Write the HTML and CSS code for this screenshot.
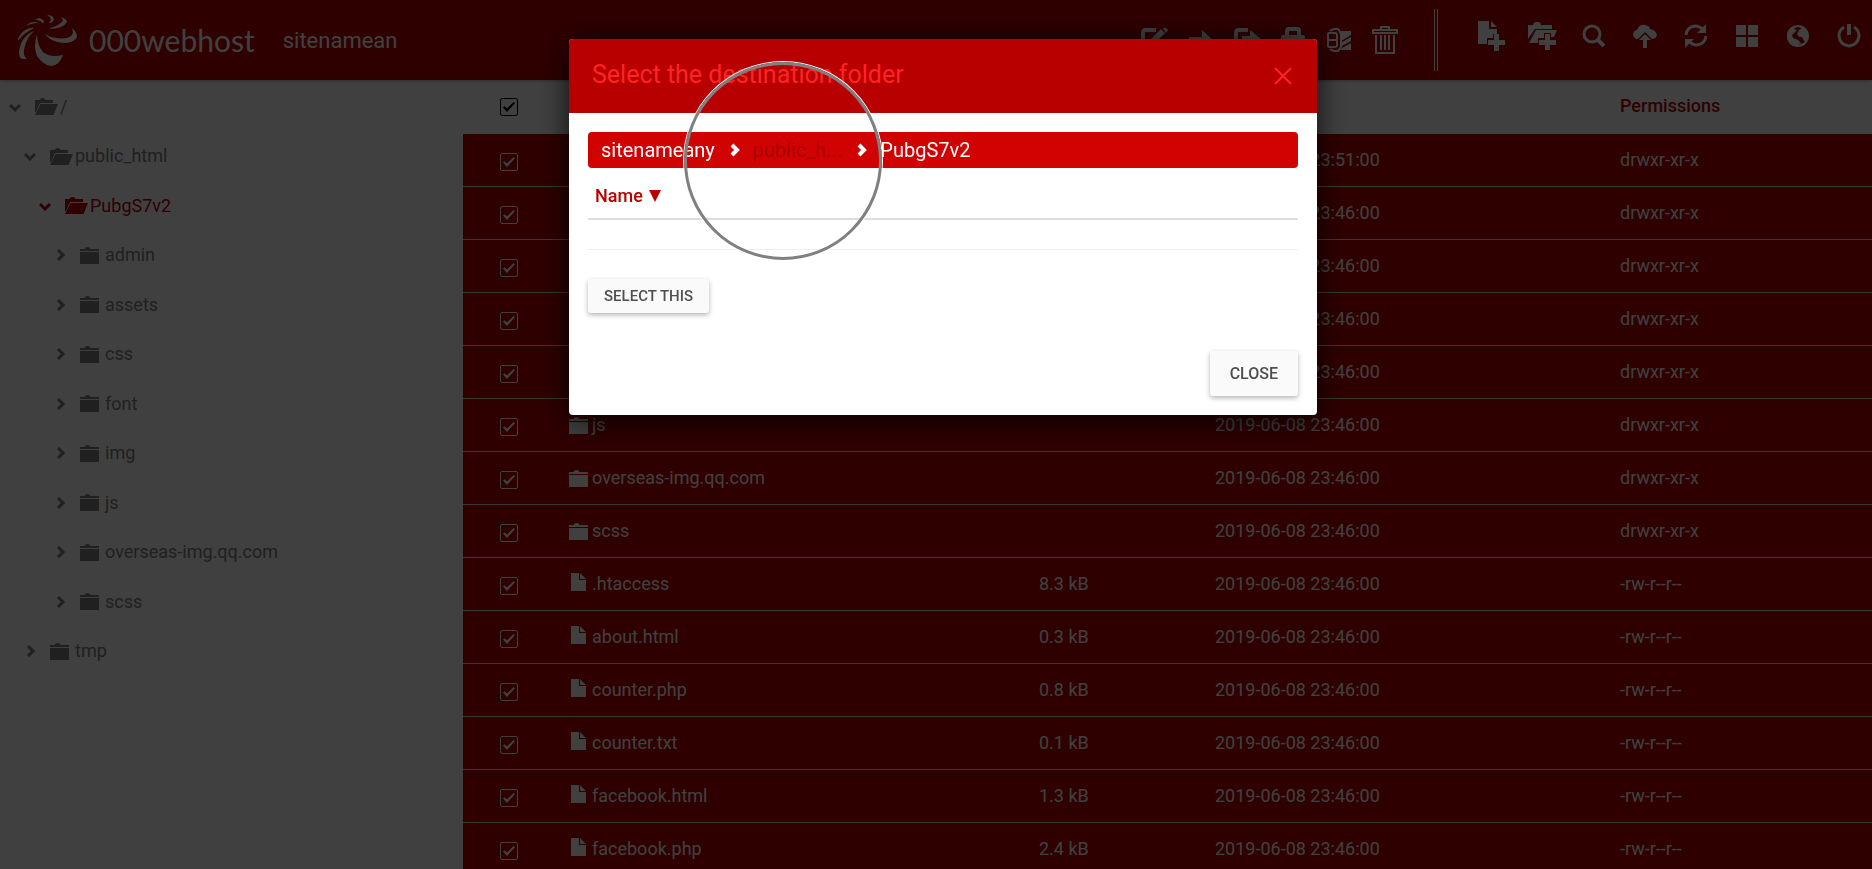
FILE: index.html
```html
<!DOCTYPE html>
<html lang="en">
<head>
<meta charset="utf-8">
<title>000webhost file manager</title>
<link rel="stylesheet" href="styles.css">
</head>
<body>
<svg class="sprite" aria-hidden="true">
  <symbol id="folder" viewBox="0 0 19 17"><path d="M0 4V2h4.500Q5 0 7.500 0 10 0 10.500 2H19v2zM0 5h19v12H0z"/></symbol>
  <symbol id="folder-open" viewBox="0 0 23 17"><path d="M0 14V2h4.500Q5 0 7.500 0 10 0 10.500 2H18v3H5L1 14zM5.500 6H23l-4.500 11H0z"/></symbol>
  <symbol id="file" viewBox="0 0 15 18"><path d="M0 0h8v7h7v11H0zM9 0l6 6H9z"/></symbol>
  <symbol id="down" viewBox="0 0 12 12"><path d="M1 4l5 5 5-5" fill="none" stroke="currentColor" stroke-width="3"/></symbol>
  <symbol id="right" viewBox="0 0 12 12"><path d="M4 1l5 5-5 5" fill="none" stroke="currentColor" stroke-width="3"/></symbol>
  <symbol id="right-bold" viewBox="0 0 12 14"><path d="M3 2l5 5-5 5" fill="none" stroke="currentColor" stroke-width="4"/></symbol>
</svg>

<div class="app">
  <header class="topbar">
    <a class="brand" href="#">
      <svg class="brand-mark" viewBox="0 0 60 52" aria-hidden="true">
        <path d="M28 20Q34 24 44 24.500 51 24.500 54 22 57 19 55 14 60 18 60 23 58 28 49 29 40 29 33 25 29 22 28 20z"/>
        <path d="M20 20Q20 31 26 38 33 44 46 41 42 52 34 52 26 51 20 42 16 33 20 20z"/>
        <path d="M17 17Q4 22 2 38 2 46 7 45L10 45Q6 42 7 36 9 24 17 17z"/>
        <path d="M16 14Q5 15 1 26 7 18 16 14z" stroke="currentColor"/>
        <path d="M32 15Q42 11 45 8 47 6 44 3 50 5 50 8 46 15 32 15z"/>
        <path d="M32 9Q35 6 33 3L30 1Q36 1 37 5 36 9 32 9z"/>
        <path d="M18 6Q23 2 27 7L26 10Q24 6 18 6zM9 12Q14 6 22 9 14 9 9 12z"/>
      </svg>
      <span class="brand-name">000webhost</span>
    </a>
    <span class="site">sitenamean</span>
    <nav class="tools" aria-label="Selection">
      <button aria-label="Rename"><svg width="28" height="24" viewBox="0 0 28 24"><path d="M15 2H5Q2 2 2 5v14q0 3 3 3h12q3 0 3-3v-6" fill="none" stroke="currentColor" stroke-width="4"/><path d="M9 15l1-4L20 1l4 4-10 10zM22 0h3l2 2-2 3z"/></svg></button>
      <button aria-label="Move"><svg width="24" height="24" viewBox="0 0 24 24"><path d="M0 9h13V2l11 10-11 10v-7H0z"/></svg></button>
      <button aria-label="Copy"><svg width="27" height="24" viewBox="0 0 27 24"><path d="M14 2H5Q2 2 2 5v14q0 3 3 3h12" fill="none" stroke="currentColor" stroke-width="4"/><path d="M8 8h8V2l11 9-11 9v-6H8z"/></svg></button>
      <button aria-label="Lock"><svg width="24" height="26" viewBox="0 0 24 26"><path d="M6 10V4q0-2 2-2h8q2 0 2 2v6" fill="none" stroke="currentColor" stroke-width="4"/><path d="M2 8h20q2 0 2 2v16H0V10q0-2 2-2z"/></svg></button>
      <button aria-label="Extract"><svg width="24" height="24" viewBox="0 0 24 24"><path d="M3 3Q5 1 8 1h3l3 4v14l-3 4H8q-3 0-5-2M2 5h6q2 0 2 2v10q0 2-2 2H2q-1 0-1-1V6q0-1 1-1zM1 12h9" fill="none" stroke="currentColor" stroke-width="2"/><path d="M12 3h12v4l-8 5h-2zM15 14l9-5v4l-9 5zM15 20l9-5v7H13z"/></svg></button>
      <button aria-label="Delete"><svg width="24" height="28" viewBox="0 0 24 28"><path d="M0 4h24v3H0zM8 4V1h8v3M3 9v18h18V9M8 9v15M12 9v15M16 9v15" fill="none" stroke="currentColor" stroke-width="2"/></svg></button>
    </nav>
    <nav class="tools tools-main" aria-label="Files">
      <button aria-label="New file"><svg width="27" height="30" viewBox="0 0 27 30"><path d="M0 0h11v8h8v5h-4v4H9v6H0zM13 0l6 6h-6zM16 13h5v6h6v5h-6v6h-5v-6h-6v-5h6z"/></svg></button>
      <button aria-label="New folder"><svg width="29" height="28" viewBox="0 0 29 28"><path d="M0 17V3h5Q5 0 9 0t4 3h11v4H7zM8 8h21l-3 7h-3v-4h-7v5h-6v5H1zM17 12h5v6h6v5h-6v5h-5v-5h-6v-5h6z"/></svg></button>
      <button aria-label="Search"><svg width="24" height="24" viewBox="0 0 24 24"><circle cx="10" cy="10" r="8" fill="none" stroke="currentColor" stroke-width="3"/><path d="M15 15l7 7" stroke="currentColor" stroke-width="4"/></svg></button>
      <button aria-label="Upload"><svg width="24" height="24" viewBox="0 0 24 24"><path d="M4 15q-4-1-4-5 1-4 4-4Q6 0 12 1q5 1 5 4 6 1 7 6-1 4-5 4l-7-7-7 7zM12 10l6 6h-4v8h-4v-8H6z"/></svg></button>
      <button aria-label="Refresh"><svg width="24" height="24" viewBox="0 0 24 24"><path d="M2 11Q3 3 11 2q5 0 8 4M22 12q-1 8-9 9-5 0-8-4" fill="none" stroke="currentColor" stroke-width="3"/><path d="M22 0v9h-9zM1 24v-9h9z"/></svg></button>
      <button aria-label="View"><svg width="22" height="22" viewBox="0 0 22 22"><path d="M0 0h10v10H0zM12 0h10v10H12zM0 12h10v10H0zM12 12h10v10H12z"/></svg></button>
      <button aria-label="Language"><svg width="24" height="24" viewBox="0 0 24 24"><circle cx="12" cy="12" r="10" fill="none" stroke="currentColor" stroke-width="2"/><path d="M1 12Q1 2 11 2L8 5l3 1-3 3-2 2 1 3 5 2 3 3-4 3Q1 22 1 12zM13 3l3-1q6 3 6 11l-2 5-2-1-2-4-3 0-2-3 2-4 3-2zM14 20l4-1 1 1-4 2z"/></svg></button>
      <button aria-label="Log out"><svg width="24" height="24" viewBox="0 0 24 24"><path d="M7 3q-5 3-5 9 1 9 10 10 9-1 10-10 0-6-5-9" fill="none" stroke="currentColor" stroke-width="3"/><path d="M10 0h4v11h-4z"/></svg></button>
    </nav>
  </header>

  <div class="main">
    <aside class="sidebar">
      <ul class="tree">
        <li><svg class="chev"><use href="#down"/></svg><svg class="open"><use href="#folder-open"/></svg><a href="#">/</a></li>
        <li class="l1"><svg class="chev"><use href="#down"/></svg><svg class="open"><use href="#folder-open"/></svg><a href="#">public_html</a></li>
        <li class="l2 current"><svg class="chev"><use href="#down"/></svg><svg class="open"><use href="#folder-open"/></svg><a href="#">PubgS7v2</a></li>
        <li class="l3"><svg class="chev"><use href="#right"/></svg><svg class="dir"><use href="#folder"/></svg><a href="#">admin</a></li>
        <li class="l3"><svg class="chev"><use href="#right"/></svg><svg class="dir"><use href="#folder"/></svg><a href="#">assets</a></li>
        <li class="l3"><svg class="chev"><use href="#right"/></svg><svg class="dir"><use href="#folder"/></svg><a href="#">css</a></li>
        <li class="l3"><svg class="chev"><use href="#right"/></svg><svg class="dir"><use href="#folder"/></svg><a href="#">font</a></li>
        <li class="l3"><svg class="chev"><use href="#right"/></svg><svg class="dir"><use href="#folder"/></svg><a href="#">img</a></li>
        <li class="l3"><svg class="chev"><use href="#right"/></svg><svg class="dir"><use href="#folder"/></svg><a href="#">js</a></li>
        <li class="l3"><svg class="chev"><use href="#right"/></svg><svg class="dir"><use href="#folder"/></svg><a href="#">overseas-img.qq.com</a></li>
        <li class="l3"><svg class="chev"><use href="#right"/></svg><svg class="dir"><use href="#folder"/></svg><a href="#">scss</a></li>
        <li class="l1"><svg class="chev"><use href="#right"/></svg><svg class="dir"><use href="#folder"/></svg><a href="#">tmp</a></li>
      </ul>
    </aside>

    <div class="listing">
      <table class="files">
        <colgroup><col class="c-check"><col class="c-name"><col class="c-size"><col class="c-date"><col class="c-perm"></colgroup>
        <thead>
          <tr><th><input type="checkbox" checked aria-label="Select all"></th><th></th><th></th><th></th><th>Permissions</th></tr>
        </thead>
        <tbody>
          <tr><td><input type="checkbox" checked aria-label="Select row 1"></td><td></td><td></td><td>2019-06-08 23:51:00</td><td>drwxr-xr-x</td></tr>
          <tr><td><input type="checkbox" checked aria-label="Select row 2"></td><td></td><td></td><td>2019-06-08 23:46:00</td><td>drwxr-xr-x</td></tr>
          <tr><td><input type="checkbox" checked aria-label="Select row 3"></td><td></td><td></td><td>2019-06-08 23:46:00</td><td>drwxr-xr-x</td></tr>
          <tr><td><input type="checkbox" checked aria-label="Select row 4"></td><td></td><td></td><td>2019-06-08 23:46:00</td><td>drwxr-xr-x</td></tr>
          <tr><td><input type="checkbox" checked aria-label="Select row 5"></td><td></td><td></td><td>2019-06-08 23:46:00</td><td>drwxr-xr-x</td></tr>
          <tr><td><input type="checkbox" checked aria-label="Select js"></td><td><a href="#"><svg class="dir"><use href="#folder"/></svg>js</a></td><td></td><td>2019-06-08 23:46:00</td><td>drwxr-xr-x</td></tr>
          <tr><td><input type="checkbox" checked aria-label="Select overseas-img.qq.com"></td><td><a href="#"><svg class="dir"><use href="#folder"/></svg>overseas-img.qq.com</a></td><td></td><td>2019-06-08 23:46:00</td><td>drwxr-xr-x</td></tr>
          <tr><td><input type="checkbox" checked aria-label="Select scss"></td><td><a href="#"><svg class="dir"><use href="#folder"/></svg>scss</a></td><td></td><td>2019-06-08 23:46:00</td><td>drwxr-xr-x</td></tr>
          <tr><td><input type="checkbox" checked aria-label="Select .htaccess"></td><td><a href="#"><svg class="doc"><use href="#file"/></svg>.htaccess</a></td><td>8.3 kB</td><td>2019-06-08 23:46:00</td><td>-rw-r--r--</td></tr>
          <tr><td><input type="checkbox" checked aria-label="Select about.html"></td><td><a href="#"><svg class="doc"><use href="#file"/></svg>about.html</a></td><td>0.3 kB</td><td>2019-06-08 23:46:00</td><td>-rw-r--r--</td></tr>
          <tr><td><input type="checkbox" checked aria-label="Select counter.php"></td><td><a href="#"><svg class="doc"><use href="#file"/></svg>counter.php</a></td><td>0.8 kB</td><td>2019-06-08 23:46:00</td><td>-rw-r--r--</td></tr>
          <tr><td><input type="checkbox" checked aria-label="Select counter.txt"></td><td><a href="#"><svg class="doc"><use href="#file"/></svg>counter.txt</a></td><td>0.1 kB</td><td>2019-06-08 23:46:00</td><td>-rw-r--r--</td></tr>
          <tr><td><input type="checkbox" checked aria-label="Select facebook.html"></td><td><a href="#"><svg class="doc"><use href="#file"/></svg>facebook.html</a></td><td>1.3 kB</td><td>2019-06-08 23:46:00</td><td>-rw-r--r--</td></tr>
          <tr><td><input type="checkbox" checked aria-label="Select facebook.php"></td><td><a href="#"><svg class="doc"><use href="#file"/></svg>facebook.php</a></td><td>2.4 kB</td><td>2019-06-08 23:46:00</td><td>-rw-r--r--</td></tr>
        </tbody>
      </table>
    </div>
  </div>
</div>

<div class="backdrop">
  <section class="modal" role="dialog" aria-labelledby="modal-title">
    <header class="modal-head">
      <h2 id="modal-title">Select the destination folder</h2>
      <button class="dismiss" aria-label="Close dialog"><svg width="18" height="18" viewBox="0 0 18 18"><path d="M1 1l16 16M17 1L1 17" stroke="currentColor" stroke-width="2"/></svg></button>
    </header>
    <div class="modal-body">
      <nav class="crumbs" aria-label="Folder path">
        <a href="#">sitenameany</a>
        <svg class="crumb-sep"><use href="#right-bold"/></svg>
        <a class="faded" href="#">public_h...</a>
        <svg class="crumb-sep"><use href="#right-bold"/></svg>
        <a href="#">PubgS7v2</a>
      </nav>
      <table class="folders">
        <thead><tr><th>Name <svg class="sort" width="12" height="12" viewBox="0 0 12 12"><path d="M0 0h12L6 12z"/></svg></th></tr></thead>
        <tbody><tr><td></td></tr></tbody>
      </table>
      <button class="btn btn-small">SELECT THIS</button>
    </div>
    <footer class="modal-foot"><button class="btn">CLOSE</button></footer>
    <div class="touch-ring"></div>
  </section>
</div>
</body>
</html>
```

FILE: styles.css
```css
* { box-sizing: border-box; }

body {
  margin: 0;
  background: #fff;
  color: #808080;
  font: 400 18px/24px Roboto, sans-serif;
  overflow: hidden;
}

a { color: inherit; text-decoration: none; }
button { padding: 0; border: 0; background: none; color: inherit; font: inherit; }
svg { display: block; flex: none; fill: currentColor; overflow: visible; }
.sprite { position: absolute; width: 0; height: 0; }

.app { display: flex; flex-direction: column; height: 100vh; }

/* top bar */
.topbar {
  display: flex;
  align-items: center;
  flex: none;
  height: 80px;
  padding: 0 0 0 17px;
  background: #b80000;
  color: #fff;
  box-shadow: 0 1px 3px rgba(0, 0, 0, .3);
  z-index: 1;
}
.brand { display: flex; align-items: center; gap: 12px; }
.brand-mark { width: 60px; height: 52px; }
.brand-name { font: 400 30px/40px Lato, sans-serif; }
.site { margin: 2px auto 0 28px; font-size: 22px; }
.tools { display: flex; padding-right: 26px; }
.tools button { display: flex; align-items: center; justify-content: center; width: 46px; height: 62px; }
.tools-main { padding: 0 0 8px 28px; margin-right: -2px; border-left: 4px double #fff; height: 62px; }
.tools-main { padding-right: 0; }
.tools-main button { width: 51px; height: 54px; }

/* folder tree */
.main { display: flex; flex: 1; min-height: 0; }
.sidebar { flex: none; width: 463px; }
.tree { margin: 0; padding: 2px 0 0; list-style: none; }
.tree li { display: flex; align-items: center; height: 49px; padding-left: 9px; }
.tree li:nth-child(even) { height: 50px; }
.tree .l1 { padding-left: 24px; }
.tree .l2 { padding-left: 39px; }
.tree .l3 { padding-left: 54px; }
.tree .current { color: #b80000; }
.chev { width: 12px; height: 12px; margin-right: 14px; }
.dir { width: 19px; height: 17px; margin-right: 6px; }
.open { width: 23px; height: 17px; margin-right: 2px; }

/* file table */
.listing { flex: 1; min-width: 0; overflow: hidden; }
.files { width: 100%; border-collapse: separate; border-spacing: 0; table-layout: fixed; }
.files th, .files td { height: 53px; padding: 0; text-align: left; border-bottom: 1px solid #e0e6e6; }
.files th { height: 54px; padding-bottom: 2px; color: #b80000; font-weight: 500; border-bottom: 0; }
.files td { background: #b80000; color: #fff; }
.files td:first-child, .files th:first-child { padding: 4px 0 0 37px; }
.files th:first-child { padding-top: 0; }
.files a { display: flex; align-items: center; }
.files .dir { margin-right: 4px; }
.doc { width: 15px; height: 18px; margin: 0 6px 4px 2px; }
.c-check { width: 106px; }
.c-name { width: 470px; }
.c-size { width: 176px; }
.c-date { width: 405px; }

input[type="checkbox"] {
  display: grid;
  place-items: center;
  appearance: none;
  width: 18px;
  height: 18px;
  margin: 0;
  border: 1px solid currentColor;
  border-radius: 2px;
  color: #fff;
}
.files th input { color: #000; }
input[type="checkbox"]::after {
  content: "";
  width: 12px;
  height: 10px;
  background: currentColor;
  clip-path: polygon(0 55%, 12% 42%, 33% 65%, 88% 0, 100% 12%, 33% 100%);
}

/* dialog */
.backdrop {
  position: fixed;
  inset: 0;
  z-index: 2;
  display: flex;
  justify-content: center;
  align-items: flex-start;
  padding: 39px 0 0 14px;
  background: rgba(0, 0, 0, .75);
}
.modal {
  position: relative;
  width: 100%;
  max-width: 748px;
  border-radius: 4px;
  background: #fff;
  box-shadow: 0 5px 30px rgba(0, 0, 0, .8);
}
.modal-head {
  display: flex;
  align-items: center;
  justify-content: space-between;
  height: 74px;
  padding: 0 25px 0 23px;
  border-radius: 4px 4px 0 0;
  background: #b80000;
  color: #ff2424;
}
.modal-head h2 { margin: 0 0 2px; font-size: 25px; font-weight: 400; line-height: 32px; }
.modal-body { padding: 19px 19px 0; }
.crumbs {
  display: flex;
  align-items: center;
  height: 36px;
  padding: 0 13px;
  border-radius: 4px;
  background: #d00202;
  color: #fff;
  font-size: 20px;
}
.crumb-sep { width: 12px; height: 14px; margin: 0 12px 0 14px; }
.faded { color: #a80000; }
.folders { width: 100%; border-collapse: separate; border-spacing: 0; }
.folders th { height: 52px; padding: 6px 7px 0; border-bottom: 2px solid #ddd; color: #b80000; font-weight: 500; text-align: left; }
.folders td { height: 30px; padding: 0; border-bottom: 1px solid #eee; }
.sort { display: inline-block; margin-left: 2px; }
.btn {
  height: 45px;
  padding: 0 20px;
  border-radius: 3px;
  background: #fafafa;
  color: #4f4f4f;
  font-size: 16px;
  font-weight: 500;
  box-shadow: 0 2px 5px rgba(0, 0, 0, .3);
}
.btn-small { height: 34px; margin-top: 29px; padding: 0 16px; font-size: 15px; }
.modal-foot { display: flex; justify-content: flex-end; padding: 38px 19px 19px; }
.touch-ring {
  position: absolute;
  left: 115px;
  top: 23px;
  width: 198px;
  height: 198px;
  border: 3px solid #808080;
  border-radius: 50%;
  box-shadow: 0 0 0 1px #fff;
  pointer-events: none;
}
```
